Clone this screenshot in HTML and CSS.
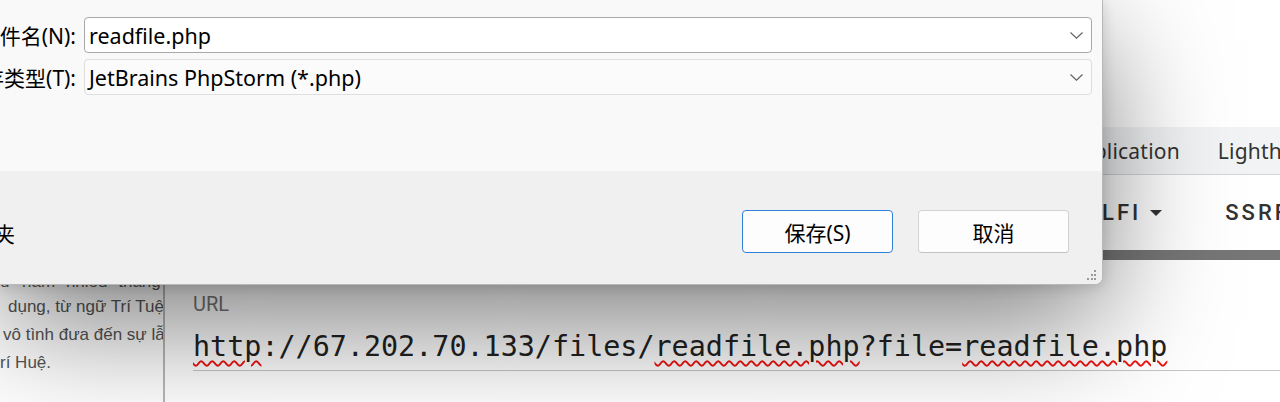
FILE: index.html
```html
<!DOCTYPE html>
<html lang="zh-CN">
<head>
<meta charset="utf-8">
<title>另存为</title>
<link rel="stylesheet" href="styles.css">
</head>
<body>
<div class="screen">
  <div class="page">
    <div class="article">
      <p class="ln ln1">ư nam nhiều tháng q</p>
      <p class="ln ln2">dụng, từ ngữ Trí Tuệ</p>
      <p class="ln ln3">vô tình đưa đến sự lẫn</p>
      <p class="ln ln4">rí Huệ.</p>
    </div>
  </div>
  <div class="devtools">
    <div class="dt-top"></div>
    <div class="dt-tabs">
      <span class="dt-tab">Application</span>
      <span class="dt-tab">Lighthouse</span>
      <span class="dt-tab">HackBar</span>
    </div>
    <div class="dt-toolbar">
      <span class="hb-item">LFI<svg class="caret" width="12" height="6" viewBox="0 0 12 6"><path d="M0 0h12L6 6z" fill="#333"/></svg></span>
      <span class="hb-item">SSRF<svg class="caret" width="12" height="6" viewBox="0 0 12 6"><path d="M0 0h12L6 6z" fill="#333"/></svg></span>
    </div>
    <div class="dt-bar"></div>
    <div class="url-section">
      <div class="url-label">URL</div>
      <div class="url-input"><span class="typo">http</span>://67.202.70.133/files/<span class="typo">readfile.php</span>?file=<span class="typo">readfile.php</span></div>
    </div>
  </div>
</div>

<div class="dialog">
  <div class="dlg-body">
    <div class="row">
      <div class="lbl"><span>文件名(N):</span></div>
      <div class="field field-focus">
        <span class="val">readfile.php</span>
        <svg class="chev" width="13" height="7" viewBox="0 0 13 7"><polyline points="0.5,0.5 6.5,6.2 12.5,0.5" fill="none" stroke="#5f5f5f" stroke-width="1.1"/></svg>
      </div>
    </div>
    <div class="row">
      <div class="lbl"><span>保存类型(T):</span></div>
      <div class="field field-plain">
        <span class="val">JetBrains PhpStorm (*.php)</span>
        <svg class="chev" width="13" height="7" viewBox="0 0 13 7"><polyline points="0.5,0.5 6.5,6.2 12.5,0.5" fill="none" stroke="#5f5f5f" stroke-width="1.1"/></svg>
      </div>
    </div>
  </div>
  <div class="dlg-footer">
    <div class="hide-folders"><span>隐藏文件夹</span></div>
    <button class="btn btn-primary">保存(S)</button>
    <button class="btn">取消</button>
  </div>
  <svg class="grip" width="12" height="12" viewBox="0 0 12 12">
    <g fill="#9a9a9a">
      <rect x="9" y="1" width="2" height="2"/>
      <rect x="6" y="5" width="2" height="2"/><rect x="9" y="5" width="2" height="2"/>
      <rect x="2" y="9" width="2" height="2"/><rect x="6" y="9" width="2" height="2"/><rect x="9" y="9" width="2" height="2"/>
    </g>
  </svg>
</div>
</body>
</html>
```

FILE: styles.css
```css
* { box-sizing: border-box; margin: 0; padding: 0; }

html, body {
  width: 1280px;
  height: 402px;
  overflow: hidden;
  background: #fff;
}

body {
  position: relative;
  font-family: "Noto Sans", "Noto Sans CJK SC", sans-serif;
  color: #000;
}

.screen {
  display: flex;
  width: 1280px;
  height: 402px;
}

/* ---------- page behind (left) ---------- */
.page {
  width: 163px;
  flex: none;
  background: #fff;
  padding-top: 270px;
}

.ln {
  font-family: "Liberation Sans", Arial, sans-serif;
  font-size: 17px;
  line-height: 28px;
  color: #555;
  white-space: nowrap;
  overflow: hidden;
}

.ln1 { word-spacing: 6px; line-height: 23px; }
.ln2 { padding-left: 8px; }
.ln3 { padding-left: 3px; }

/* ---------- devtools ---------- */
.devtools {
  flex: 1;
  display: flex;
  flex-direction: column;
  border-left: 2px solid #b8b8b8;
  background: #fff;
  min-width: 0;
}

.dt-top { height: 127px; background: #fff; }

.dt-tabs {
  height: 48px;
  display: flex;
  align-items: center;
  background: #f1f3f4;
  border-bottom: 1px solid #d3d5d8;
  padding-left: 902px;
  gap: 38px;
  white-space: nowrap;
  overflow: hidden;
  font-family: "Noto Sans", sans-serif;
  font-size: 21px;
  letter-spacing: 0.2px;
  color: #333;
}

.dt-toolbar {
  height: 75px;
  display: flex;
  align-items: center;
  gap: 63px;
  padding-left: 937px;
  white-space: nowrap;
  overflow: hidden;
  font-family: Roboto, sans-serif;
  font-weight: 500;
  font-size: 22px;
  letter-spacing: 3px;
  color: #333;
}

.hb-item { display: inline-flex; align-items: center; }
.caret { margin-left: 9px; }

.dt-bar { height: 10px; background: #767676; }

.url-section {
  flex: 1;
  padding: 32px 0 0 28px;
}

.url-label {
  font-family: Roboto, sans-serif;
  font-size: 20px;
  line-height: 24px;
  color: #757575;
}

.url-input {
  margin-top: 13px;
  padding-bottom: 5px;
  border-bottom: 1px solid #c6c6c6;
  font-family: "DejaVu Sans Mono", "Liberation Mono", monospace;
  font-size: 28.4px;
  line-height: 36px;
  color: #222;
  white-space: nowrap;
}

.typo {
  text-decoration: underline wavy #f01010;
  text-decoration-thickness: 1.5px;
  text-underline-offset: 4px;
}

/* ---------- save dialog ---------- */
.dialog {
  position: absolute;
  left: 0;
  top: 0;
  width: 1103px;
  height: 285px;
  display: flex;
  flex-direction: column;
  background: #f9f9f9;
  border-right: 1px solid #b8b8b8;
  border-bottom: 1px solid #b8b8b8;
  border-bottom-right-radius: 8px;
  overflow: hidden;
  box-shadow: 0 40px 120px rgba(0, 0, 0, 0.5), 0 2px 14px rgba(0, 0, 0, 0.14);
  font-family: "Noto Sans", "Noto Sans CJK SC", sans-serif;
  font-size: 21.5px;
  color: #000;
}

.dlg-body {
  height: 171px;
  padding-top: 17px;
  display: flex;
  flex-direction: column;
  gap: 6px;
}

.row {
  display: flex;
  height: 36px;
  align-items: center;
}

.lbl {
  width: 84px;
  flex: none;
  padding-right: 8px;
  display: flex;
  justify-content: flex-end;
  overflow: hidden;
  white-space: nowrap;
  font-size: 21px;
}

.field {
  width: 1008px;
  height: 36px;
  display: flex;
  align-items: center;
  justify-content: space-between;
  padding: 0 8px 0 4px;
  border-radius: 4px;
  white-space: nowrap;
}

.field-focus {
  background: #fff;
  border: 1px solid #a9a9a9;
}

.field-plain {
  background: #fbfbfb;
  border: 1px solid #dedede;
}

.dlg-footer {
  flex: 1;
  display: flex;
  align-items: flex-start;
  background: #f0f0f0;
  padding: 39px 33px 0 0;
}

.hide-folders {
  width: 15px;
  margin-top: 7px;
  display: flex;
  justify-content: flex-end;
  overflow: hidden;
  white-space: nowrap;
  line-height: 34px;
  font-size: 21px;
}

.btn {
  width: 151px;
  height: 43px;
  margin-left: 25px;
  background: #fdfdfd;
  border: 1px solid #d3d3d3;
  border-bottom-color: #c4c4c4;
  border-radius: 4px;
  font-family: "Noto Sans", "Noto Sans CJK SC", sans-serif;
  font-size: 21px;
  color: #000;
}

.btn-primary {
  margin-left: auto;
  border: 1px solid #2f80d6;
}

.grip {
  position: absolute;
  right: 5px;
  bottom: 3px;
}
```
